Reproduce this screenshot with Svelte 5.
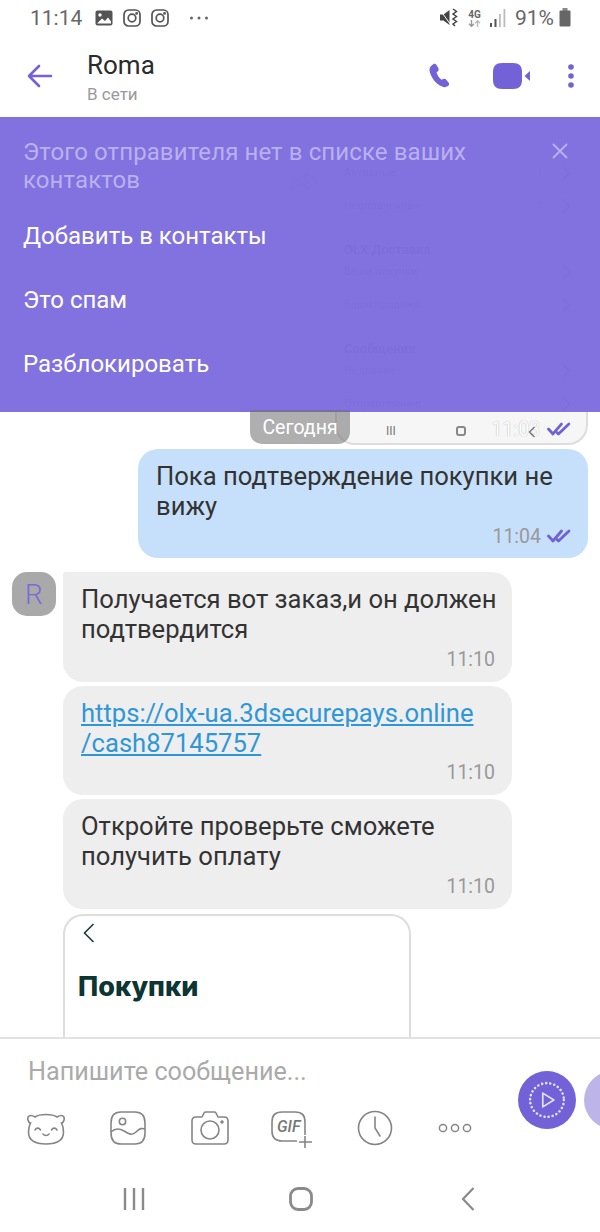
<script lang="ts">
	const rows = [
		{ label: 'Активные', count: '1' },
		{ label: 'Неоплаченные', count: '1' },
		{ label: 'OLX Доставка', heading: true },
		{ label: 'Ваши покупки' },
		{ label: 'Ваши продажи' },
		{ label: 'Сообщения', heading: true },
		{ label: 'Недавние' },
		{ label: 'Отправленные' }
	];

	const incoming = [
		{ lines: ['Получается вот заказ,и он должен', 'подтвердится'], time: '11:10', first: true },
		{ lines: ['https://olx-ua.3dsecurepays.online', '/cash87145757'], time: '11:10', link: true },
		{ lines: ['Откройте проверьте сможете', 'получить оплату'], time: '11:10' }
	];

	const actions = ['Добавить в контакты', 'Это спам', 'Разблокировать'];
</script>

{#snippet checks(cls: string)}
	<svg class={cls} viewBox="0 0 24 14" width="24" height="14" fill="none" stroke="#6f61d6" stroke-width="2.800" stroke-linecap="round" stroke-linejoin="round">
		<path d="M1.500 7 6 12 14.500 2" />
		<path d="M10 10.500 11.500 12 22 2" />
	</svg>
{/snippet}

<div class="page">
	<div class="status">
		<span class="clock">11:14</span>
		<svg class="st-icon" viewBox="0 0 18 16" width="18" height="16">
			<rect x="0.5" y="0.5" width="17" height="15" rx="2" fill="#555" />
			<circle cx="5" cy="5" r="1.7" fill="#fff" />
			<path d="M2 13.5 7 8.5 10 11 13 7.5 16 11.5V13.5Z" fill="#fff" />
		</svg>
		<svg class="st-icon" viewBox="0 0 18 18" width="18" height="18" fill="none" stroke="#555" stroke-width="1.7">
			<rect x="1" y="1" width="16" height="16" rx="4.5" />
			<circle cx="9" cy="9" r="3.8" />
			<circle cx="13.6" cy="4.4" r="0.6" fill="#555" />
		</svg>
		<svg class="st-icon" viewBox="0 0 18 18" width="18" height="18" fill="none" stroke="#555" stroke-width="1.7">
			<rect x="1" y="1" width="16" height="16" rx="4.5" />
			<circle cx="9" cy="9" r="3.8" />
			<circle cx="13.6" cy="4.4" r="0.6" fill="#555" />
		</svg>
		<svg class="st-dots" viewBox="0 0 20 4" width="20" height="4" fill="#666">
			<circle cx="2.5" cy="2" r="1.5" />
			<circle cx="10" cy="2" r="1.5" />
			<circle cx="17.5" cy="2" r="1.5" />
		</svg>
		<span class="grow"></span>
		<svg viewBox="0 0 18 19" width="18" height="19">
			<path d="M0 6.500H3.500L9.500 2V17L3.500 12.500H0Z" fill="#444" />
			<path d="M0.500 2.500 10.500 16.500" stroke="#fff" stroke-width="1" />
			<path d="M13 1 16.500 3.500 13 6 16.500 8.500 13 11 16.500 13.500 13 16 15 18" fill="none" stroke="#444" stroke-width="1.500" />
		</svg>
		<span class="net">
			<span class="net-label">4G</span>
			<svg viewBox="0 0 13 7" width="13" height="7" fill="none" stroke-width="1.4">
				<path d="M3.500 0V6M1 3.800 3.500 6.300 6 3.800" stroke="#999" />
				<path d="M9.500 7V1M7 3.200 9.500.7 12 3.200" stroke="#bbb" />
			</svg>
		</span>
		<svg class="signal" viewBox="0 0 16 18" width="16" height="18">
			<rect x="0" y="14" width="2" height="4" fill="#555" />
			<rect x="4.500" y="10" width="2" height="8" fill="#555" />
			<rect x="9" y="5" width="1.800" height="13" fill="#bbb" />
			<rect x="13.500" y="0" width="1.800" height="18" fill="#bbb" />
		</svg>
		<span class="battery-text">91%</span>
		<svg viewBox="0 0 12 19" width="12" height="19" fill="#666">
			<rect x="3.500" y="0" width="5" height="3" fill="#888" />
			<rect x="0.500" y="2.500" width="11" height="16" rx="1" />
		</svg>
	</div>

	<header class="head">
		<svg class="back" viewBox="0 0 26 24" width="26" height="24" fill="none" stroke="#7361d8" stroke-width="2.600" stroke-linecap="round" stroke-linejoin="round">
			<path d="M2 12H24M12 2 2 12 12 22" />
		</svg>
		<div class="who">
			<div class="name">Roma</div>
			<div class="presence">В сети</div>
		</div>
		<svg class="phone" viewBox="0 0 24 26" width="24" height="26" fill="#7361d8">
			<path d="M5.300 1.200c1.200-.7 2.500-.3 3.200.9l1.900 3.200c.6 1 .4 2.200-.5 2.900l-1.400 1.200c.6 2.300 2.700 5.600 5.100 7.300l1.700-.8c1-.5 2.200-.2 2.900.8l2.500 3.100c.8 1.100.5 2.400-.6 3.200-1.700 1.200-3.900 1.600-6 .6C8 21.400 2.500 14 1.500 7.500 1.100 4.800 3 2.500 5.300 1.200Z" />
		</svg>
		<svg class="video" viewBox="0 0 38 26" width="38" height="26" fill="#7361d8">
			<path d="M9 0H20C26 0 29 3 29 9V17C29 23 26 26 20 26H9C3 26 0 23 0 17V9C0 3 3 0 9 0Z" />
			<path d="M37 8V18L31.500 13Z" />
		</svg>
		<svg class="more" viewBox="0 0 6 24" width="6" height="24" fill="#7361d8">
			<circle cx="3" cy="3" r="2.800" />
			<circle cx="3" cy="12" r="2.800" />
			<circle cx="3" cy="21" r="2.800" />
		</svg>
	</header>

	<main class="chat">
		<svg class="share" viewBox="0 0 32 24" width="32" height="24" fill="none" stroke="#999" stroke-width="1.500" stroke-linejoin="round">
			<path d="M18 2 30 10 18 18V13C11 13 6 16 2 22 3 14 9 7 18 7Z" />
		</svg>

		<section class="shot">
			{#each rows as row}
				{#if row.heading}
					<div class="shot-heading">{row.label}</div>
				{:else}
					<div class="shot-row">
						<span class="grow">{row.label}</span>
						{#if row.count}<span class="shot-count">{row.count}</span>{/if}
						<svg viewBox="0 0 10 16" width="10" height="16" fill="none" stroke="#555" stroke-width="1.500"><path d="M1.500 1 8.500 8 1.500 15" /></svg>
					</div>
				{/if}
			{/each}
			<div class="shot-foot">
				<span class="foot-bars">III</span>
				<span class="foot-home"></span>
				<span class="foot-time">11:03</span>
				<svg class="foot-back" viewBox="0 0 8 12" width="8" height="12" fill="none" stroke="#777" stroke-width="1.400"><path d="M6.500 1 1.500 6 6.500 11" /></svg>
				{@render checks('foot-check')}
			</div>
		</section>

		<div class="bubble out">
			<div class="line">Пока подтверждение покупки не</div>
			<div class="line">вижу</div>
			<div class="meta">
				<span class="time">11:04</span>
				{@render checks('meta-check')}
			</div>
		</div>

		<div class="thread">
			<div class="avatar">R</div>
			<div class="msgs">
				{#each incoming as msg}
					<div class="bubble in" class:first={msg.first}>
						{#each msg.lines as line}
							<div class="line" class:link={msg.link}>{line}</div>
						{/each}
						<div class="meta"><span class="time">{msg.time}</span></div>
					</div>
				{/each}
				<div class="card">
					<svg class="card-back" viewBox="0 0 12 20" width="12" height="20" fill="none" stroke="#1c3a3a" stroke-width="1.600"><path d="M10.500 1 1.500 10 10.500 19" /></svg>
					<div class="card-title">Покупки</div>
				</div>
			</div>
		</div>

		<div class="banner">
			<button class="banner-close" aria-label="Закрыть">
				<svg viewBox="0 0 16 16" width="16" height="16" fill="none" stroke="#b9b0ef" stroke-width="1.800"><path d="M1 1 15 15M15 1 1 15" /></svg>
			</button>
			<p class="banner-title">Этого отправителя нет в списке ваших контактов</p>
			{#each actions as action}
				<div class="banner-action">{action}</div>
			{/each}
		</div>

		<div class="date-pill">Сегодня</div>
	</main>

	<footer class="composer">
		<div class="compose-main">
			<div class="placeholder">Напишите сообщение...</div>
			<div class="tools">
				<svg viewBox="0 0 38 34" width="38" height="34" fill="none" stroke="#858585" stroke-width="1.600" stroke-linecap="round">
					<path d="M8 6C3 3 0 5 1 9 1.500 11 3 12 3.500 12 2 15 1.500 18 1.500 21 1.500 29 8 33 19 33S36.500 29 36.500 21C36.500 18 36 15 34.500 12 35 12 36.500 11 37 9 38 5 35 3 30 6 27 4 23 3.500 19 3.500S11 4 8 6Z" />
					<path d="M8 19C9.500 16.500 12 16.500 13.500 19M24.500 19C26 16.500 28.500 16.500 30 19M16 23C17.500 25 20.500 25 22 23" />
				</svg>
				<svg viewBox="0 0 36 34" width="36" height="34" fill="none" stroke="#858585" stroke-width="1.600">
					<path d="M11 1H25C32 1 35 5 35 12V22C35 29 32 33 25 33H11C4 33 1 29 1 22V12C1 5 4 1 11 1Z" />
					<circle cx="12.500" cy="10.500" r="3.200" />
					<path d="M1 21C5 17 9 17 14 20S22 25 26 21 32 17 35 18" />
				</svg>
				<svg viewBox="0 0 38 34" width="38" height="34" fill="none" stroke="#858585" stroke-width="1.600" stroke-linejoin="round">
					<path d="M5 6H11L13 2C13.500 1 14 1 15 1H23C24 1 24.500 1 25 2L27 6H33C36 6 37 8 37 10V29C37 32 35 33 33 33H5C3 33 1 32 1 29V10C1 8 2 6 5 6Z" />
					<circle cx="19" cy="19" r="9" />
					<circle cx="31" cy="11" r="1" fill="#858585" />
				</svg>
				<div class="gif">
					<svg viewBox="0 0 42 38" width="42" height="38" fill="none" stroke="#858585" stroke-width="1.600">
						<path d="M34 24V11C34 4 31 1 24 1H11C4 1 1 4 1 11V20C1 27 4 30 11 30H26" />
						<path d="M34 25V37M28 31H41" />
					</svg>
					<span class="gif-label">GIF</span>
				</div>
				<svg viewBox="0 0 36 36" width="36" height="36" fill="none" stroke="#858585" stroke-width="1.600" stroke-linecap="round">
					<circle cx="18" cy="18" r="16.500" />
					<path d="M18 7V18L23 26" />
				</svg>
				<svg class="tool-dots" viewBox="0 0 34 10" width="34" height="10" fill="none" stroke="#858585" stroke-width="1.500">
					<circle cx="5" cy="5" r="3.600" />
					<circle cx="17" cy="5" r="3.600" />
					<circle cx="29" cy="5" r="3.600" />
				</svg>
			</div>
		</div>
		<div class="round primary">
			<svg viewBox="0 0 36 36" width="38" height="38" fill="none" stroke="#e4e0fa" stroke-width="1.600">
				<circle cx="18" cy="18" r="16" stroke-width="2.400" stroke-dasharray="0.100 3.800" stroke-linecap="round" />
				<path d="M14 11.500V24.500L24.500 18Z" stroke-linejoin="round" />
			</svg>
		</div>
		<div class="round secondary"></div>
	</footer>

	<nav class="softkeys">
		<svg viewBox="0 0 22 24" width="22" height="24" stroke="#8a8a8a" stroke-width="2.400"><path d="M2 1V23M11 1V23M20 1V23" /></svg>
		<svg viewBox="0 0 24 24" width="24" height="24" fill="none" stroke="#8a8a8a" stroke-width="2.800"><rect x="1.500" y="1.500" width="21" height="21" rx="7.500" /></svg>
		<svg viewBox="0 0 14 24" width="14" height="24" fill="none" stroke="#8a8a8a" stroke-width="2.200"><path d="M12.500 1 2 12 12.500 23" /></svg>
	</nav>
</div>

<style>
	:global(body) {
		margin: 0;
		background: #fff;
	}

	.page {
		width: 600px;
		height: 1232px;
		display: flex;
		flex-direction: column;
		overflow: hidden;
		background: #fff;
		font-family: Roboto, "Noto Sans", sans-serif;
		color: #333;
	}

	.grow {
		flex: 1;
	}

	/* status bar */
	.status {
		height: 35px;
		flex-shrink: 0;
		display: flex;
		align-items: center;
		padding: 0 29px 0 30px;
		color: #666;
	}

	.clock {
		font-size: 21px;
		width: 65px;
	}

	.st-icon {
		margin-right: 10px;
	}

	.st-dots {
		margin-left: 10px;
	}

	.net {
		display: flex;
		flex-direction: column;
		align-items: center;
		margin: 0 9px 0 10px;
	}

	.net-label {
		font-size: 10px;
		line-height: 11px;
		font-weight: 700;
		color: #666;
	}

	.signal {
		margin-right: 9px;
	}

	.battery-text {
		font-size: 21px;
		margin-right: 5px;
	}

	/* conversation header */
	.head {
		height: 80px;
		flex-shrink: 0;
		display: flex;
		align-items: center;
		padding: 2px 27px 0;
		box-sizing: border-box;
	}

	.back {
		margin-right: 34px;
	}

	.who {
		flex: 1;
		margin-top: 2px;
	}

	.name {
		font-size: 26px;
		line-height: 30px;
		color: #2b2b2b;
	}

	.presence {
		margin-top: 3px;
		font-size: 17px;
		line-height: 22px;
		color: #999;
	}

	.phone {
		margin-right: 41px;
	}

	.video {
		margin-right: 37px;
	}

	.more {
		margin-right: -1px;
	}

	/* chat */
	.chat {
		flex: 1;
		min-height: 0;
		position: relative;
		overflow: hidden;
		display: flex;
		flex-direction: column;
		align-items: flex-end;
		padding: 2px 12px 0;
	}

	.share {
		position: absolute;
		left: 288px;
		top: 56px;
	}

	.shot {
		width: 253px;
		height: 328px;
		box-sizing: border-box;
		flex-shrink: 0;
		padding: 39px 15px 0 7px;
		background: #f6f6f6;
		border: 2px solid #ddd;
		border-top: 0;
		border-radius: 0 0 20px 20px;
		display: flex;
		flex-direction: column;
		color: #555;
	}

	.shot-row {
		height: 33px;
		flex-shrink: 0;
		display: flex;
		align-items: center;
		gap: 18px;
		font-size: 11px;
	}

	.shot-count {
		color: #777;
	}

	.shot-heading {
		margin-top: 22px;
		height: 11px;
		line-height: 11px;
		font-size: 13px;
		font-weight: 700;
		color: #333;
	}

	.shot-foot {
		position: relative;
		height: 18px;
		display: flex;
		align-items: center;
		padding-left: 42px;
	}

	.foot-bars {
		width: 70px;
		margin-top: 4px;
		font-size: 12px;
		color: #777;
	}

	.foot-home {
		width: 6px;
		height: 6px;
		margin: 4px 26px 0 0;
		border: 2px solid #888;
		border-radius: 3px;
	}

	.foot-time {
		font-size: 19.500px;
		color: #fff;
		text-shadow: 0 0 1px #999;
	}

	.foot-back {
		position: absolute;
		left: 184px;
		top: 6px;
	}

	.foot-check {
		margin-left: 7px;
	}

	.bubble {
		box-sizing: border-box;
		flex-shrink: 0;
		width: 450px;
		padding: 12px 17px 11px 18px;
		border-radius: 20px;
		font-size: 25.6px;
	}

	.line {
		line-height: 30px;
		white-space: nowrap;
	}

	.link {
		color: #2f97d8;
		text-decoration: underline;
	}

	.meta {
		display: flex;
		justify-content: flex-end;
		align-items: center;
		gap: 6px;
		height: 22px;
		margin-top: 4px;
	}

	.time {
		font-size: 19.500px;
		color: #999;
	}

	.out {
		margin-top: 4px;
		height: 109px;
		background: #c6e0fb;
	}

	.thread {
		align-self: stretch;
		display: flex;
		justify-content: space-between;
		margin-top: 14px;
	}

	.avatar {
		width: 44px;
		height: 44px;
		display: flex;
		align-items: center;
		justify-content: center;
		background: #a9a9a9;
		border-radius: 15px;
		color: #7a6bd8;
		font-size: 28px;
		font-weight: 300;
	}

	.msgs {
		width: 449px;
		margin-right: 76px;
		display: flex;
		flex-direction: column;
		gap: 4px;
	}

	.in {
		width: 449px;
		height: 109.500px;
		background: #eee;
	}

	.first {
		border-top-left-radius: 3px;
	}

	.card {
		width: 348px;
		height: 140px;
		box-sizing: border-box;
		margin-top: 1px;
		padding: 7px 13px;
		border: 2px solid #ddd;
		border-bottom: 0;
		border-radius: 20px 20px 0 0;
	}

	.card-back {
		display: block;
		margin-left: 5px;
	}

	.card-title {
		margin-top: 28px;
		font-family: Inter, Roboto, sans-serif;
		font-size: 27px;
		line-height: 32px;
		font-weight: 800;
		color: #0c3533;
	}

	/* unknown sender banner */
	.banner {
		position: absolute;
		left: 0;
		right: 0;
		top: 2px;
		height: 295px;
		box-sizing: border-box;
		padding: 21px 23px 0;
		background: rgba(126, 111, 222, 0.975);
		color: #fff;
	}

	.banner-title {
		margin: 0;
		width: 470px;
		font-size: 24px;
		line-height: 28px;
		color: #b9b0ef;
		letter-spacing: 0.1px;
	}

	.banner-close {
		position: absolute;
		right: 32px;
		top: 26px;
		padding: 0;
		border: 0;
		background: none;
		line-height: 0;
	}

	.banner-action {
		height: 64px;
		display: flex;
		align-items: center;
		font-size: 24px;
	}

	.banner-title + .banner-action {
		margin-top: 10px;
	}

	.date-pill {
		position: absolute;
		left: 250px;
		top: 295px;
		width: 100px;
		height: 34px;
		display: flex;
		align-items: center;
		justify-content: center;
		background: rgba(110, 110, 110, 0.55);
		border-radius: 0 0 12px 12px;
		color: #fff;
		font-size: 19.500px;
	}

	/* composer */
	.composer {
		height: 128px;
		flex-shrink: 0;
		box-sizing: border-box;
		border-top: 2px solid #e2e2e2;
		display: flex;
		align-items: flex-start;
	}

	.compose-main {
		width: 518px;
		flex-shrink: 0;
		box-sizing: border-box;
		padding: 18px 0 0 27px;
	}

	.placeholder {
		font-size: 25.200px;
		line-height: 30px;
		color: #aaa;
		margin-left: 1px;
	}

	.tools {
		margin-top: 20px;
		display: flex;
		align-items: center;
		gap: 45px;
	}

	.gif {
		position: relative;
		line-height: 0;
		margin: 4px -1px 0 -3px;
	}

	.gif-label {
		position: absolute;
		left: 6px;
		top: 7px;
		font-size: 16px;
		line-height: 18px;
		font-style: italic;
		font-weight: 500;
		color: #777;
	}

	.round {
		width: 58px;
		height: 58px;
		flex-shrink: 0;
		border-radius: 50%;
		margin-top: 32px;
		display: flex;
		align-items: center;
		justify-content: center;
	}

	.primary {
		background: #7361d8;
	}

	.secondary {
		margin-left: 8px;
		background: #bdb5ea;
	}

	/* android nav */
	.softkeys {
		flex-shrink: 0;
		height: 67px;
		display: grid;
		grid-template-columns: 133px 202px 132px;
		justify-content: start;
		justify-items: center;
		align-items: start;
		padding: 22px 0 0 67px;
		box-sizing: border-box;
	}
</style>
